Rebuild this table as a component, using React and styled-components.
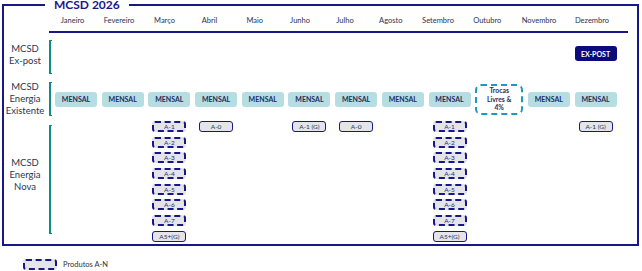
import React from 'react';
import styled, { createGlobalStyle } from 'styled-components';

const GlobalStyle = createGlobalStyle`
    body {
        margin: 0;
        background: #ffffff;
        font-family: Lato, "Open Sans", sans-serif;
    }
`;

const NAVY = '#17178a';
const TEAL = '#128a86';

const Page = styled.div`
    width: 642px;
    height: 271px;
    overflow: hidden;
`;

const Frame = styled.fieldset`
    margin: 0 0 0 2px;
    padding: 0;
    width: 637px;
    height: 246px;
    box-sizing: border-box;
    border: 2px solid ${NAVY};
    min-width: 0;
`;

const Title = styled.legend`
    margin-left: 41px;
    padding: 0 9px;
    height: 10px;
    line-height: 10px;
    font-size: 12px;
    font-weight: 700;
    color: ${NAVY};
`;

const Header = styled.div`
    margin-left: 45px;
    width: 579px;
    height: 21px;
    border-bottom: 2px solid ${NAVY};
    display: grid;
    grid-template-columns: 47px 46px 45px 45px 45.5px 45px 45px 46.5px 48px 50.5px 53px 53px;
    align-items: center;
`;

const Month = styled.span`
    text-align: center;
    font-size: 7.5px;
    color: #2a3350;
`;

const Row = styled.div`
    display: grid;
    grid-template-columns: 42px 3px 1fr;
    column-gap: 3px;
    height: ${p => p.$h}px;
    margin-top: ${p => p.$mt}px;
`;

const Label = styled.div`
    display: flex;
    align-items: center;
    justify-content: center;
    text-align: center;
    font-size: 9.5px;
    line-height: 12px;
    color: #2b3550;
    padding-bottom: ${p => p.$pb || 0}px;
`;

const Bracket = styled.div`
    border: 2px solid ${TEAL};
    border-right: none;
    border-top-width: 1.5px;
    border-bottom-width: 1.5px;
    margin: ${p => p.$top}px 0 ${p => p.$bottom}px;
`;

const Months = styled.div`
    display: grid;
    grid-template-columns: repeat(9, 42px) 48px 42px 42px;
    column-gap: 4.7px;
    align-items: ${p => p.$align || 'center'};
`;

const ExPost = styled.div`
    grid-column: 12;
    align-self: start;
    margin-top: 10px;
    height: 15px;
    border-radius: 3px;
    background: #0b0b7e;
    color: #ffffff;
    font-size: 7px;
    font-weight: 700;
    display: flex;
    align-items: center;
    justify-content: center;
`;

const Mensal = styled.div`
    height: 15px;
    border-radius: 3px;
    background: #b6dde1;
    color: #1e2d5c;
    font-size: 7px;
    font-weight: 700;
    display: flex;
    align-items: center;
    justify-content: center;
`;

const Trocas = styled.div`
    height: 31px;
    box-sizing: border-box;
    border: 2px dashed #1c98c2;
    border-radius: 6px;
    background: #ffffff;
    color: #1e2d5c;
    font-size: 6.8px;
    font-weight: 700;
    line-height: 8.5px;
    display: flex;
    align-items: center;
    justify-content: center;
    text-align: center;
`;

const Stack = styled.div`
    display: flex;
    flex-direction: column;
    align-items: center;
    gap: 4.7px;
`;

const Product = styled.div`
    width: 34px;
    height: 11px;
    box-sizing: border-box;
    border: ${p => (p.$dashed ? `2px dashed ${NAVY}` : `1.6px solid ${NAVY}`)};
    border-radius: 3px;
    background: #e4e4e9;
    color: #23306a;
    font-size: 6.5px;
    line-height: 7px;
    display: flex;
    align-items: center;
    justify-content: center;
    white-space: nowrap;
`;

const Key = styled.div`
    display: flex;
    align-items: center;
    gap: 6px;
    margin: 13px 0 0 23px;
`;

const KeyText = styled.span`
    font-size: 7.5px;
    color: #333333;
`;

const MONTHS = ['Janeiro', 'Fevereiro', 'Março', 'Abril', 'Maio', 'Junho', 'Julho', 'Agosto', 'Setembro', 'Outubro', 'Novembro', 'Dezembro'];

const aN = ['A-1', 'A-2', 'A-3', 'A-4', 'A-5', 'A-6', 'A-7'].map(l => ({ l, dashed: true }));
const fullSet = [...aN, { l: 'A5+(G)' }];

const NOVA = {
    2: fullSet,
    3: [{ l: 'A-0' }],
    5: [{ l: 'A-1 (G)' }],
    6: [{ l: 'A-0' }],
    8: fullSet,
    11: [{ l: 'A-1 (G)' }],
};

const App = () => {
  return (
    <Page>
        <GlobalStyle />
        <Frame>
            <Title>MCSD 2026</Title>
            <Header>
                {MONTHS.map(m => <Month key={m}>{m}</Month>)}
            </Header>

            <Row $h={42} $mt={3}>
                <Label $pb={4}>MCSD<br />Ex-post</Label>
                <Bracket $top={4} $bottom={4} />
                <Months>
                    <ExPost>EX-POST</ExPost>
                </Months>
            </Row>

            <Row $h={42} $mt={0}>
                <Label>MCSD<br />Energia<br />Existente</Label>
                <Bracket $top={4} $bottom={4} />
                <Months>
                    {MONTHS.map((m, i) => i === 9
                        ? <Trocas key={m}>Trocas<br />Livres &amp;<br />4%</Trocas>
                        : <Mensal key={m}>MENSAL</Mensal>)}
                </Months>
            </Row>

            <Row $h={121} $mt={1}>
                <Label $pb={14}>MCSD<br />Energia<br />Nova</Label>
                <Bracket $top={4} $bottom={8} />
                <Months $align="start">
                    {MONTHS.map((m, i) => (
                        <Stack key={m}>
                            {(NOVA[i] || []).map(p => (
                                <Product key={p.l} $dashed={p.dashed}>{p.l}</Product>
                            ))}
                        </Stack>
                    ))}
                </Months>
            </Row>
        </Frame>
        <Key>
            <Product $dashed />
            <KeyText>Produtos A-N</KeyText>
        </Key>
    </Page>
  )
}

export default App
